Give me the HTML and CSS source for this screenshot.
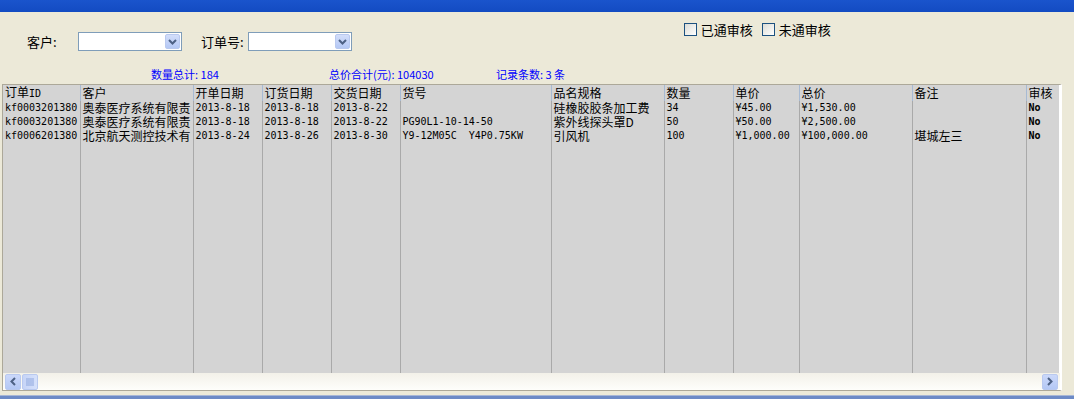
FILE: index.html
```html
<!DOCTYPE html>
<html lang="zh-CN">
<head>
	<meta charset="UTF-8">
	<title>订单审核</title>
	<link rel="stylesheet" href="styles.css">
</head>
<body>
<div class="titlebar"></div>

<div class="filters">
	<div class="search">
		<span class="label">客户:</span>
		<div class="combo"><span class="drop"><svg width="9" height="6" viewBox="0 0 9 6"><path d="M1 1l3.5 3.5L8 1" fill="none" stroke="#4d6185" stroke-width="2"/></svg></span></div>
		<span class="label second">订单号:</span>
		<div class="combo"><span class="drop"><svg width="9" height="6" viewBox="0 0 9 6"><path d="M1 1l3.5 3.5L8 1" fill="none" stroke="#4d6185" stroke-width="2"/></svg></span></div>
	</div>
	<div class="checks">
		<label class="check"><span class="box"></span>已通审核</label>
		<label class="check"><span class="box"></span>未通审核</label>
	</div>
</div>

<div class="stats">
	<span class="stat s1">数量总计: 184</span>
	<span class="stat s2">总价合计(元): 104030</span>
	<span class="stat s3">记录条数: 3 条</span>
</div>

<div class="grid">
	<div class="view">
		<table class="orders">
			<colgroup>
				<col style="width:77px"><col style="width:113px"><col style="width:69px"><col style="width:69px">
				<col style="width:69px"><col style="width:151px"><col style="width:113px"><col style="width:69px">
				<col style="width:66px"><col style="width:113px"><col style="width:114px"><col style="width:40px">
			</colgroup>
			<thead>
			<tr>
				<th>订单<span class="m">ID</span></th><th>客户</th><th>开单日期</th><th>订货日期</th><th>交货日期</th><th>货号</th>
				<th>品名规格</th><th>数量</th><th>单价</th><th>总价</th><th>备注</th><th>审核</th>
			</tr>
			</thead>
			<tbody>
			<tr>
				<td class="m">kf0003201380</td><td>奥泰医疗系统有限责</td><td class="m">2013-8-18</td><td class="m">2013-8-18</td><td class="m">2013-8-22</td><td></td>
				<td>硅橡胶胶条加工费</td><td class="m">34</td><td class="m">¥45.00</td><td class="m">¥1,530.00</td><td></td><td class="m b">No</td>
			</tr>
			<tr>
				<td class="m">kf0003201380</td><td>奥泰医疗系统有限责</td><td class="m">2013-8-18</td><td class="m">2013-8-18</td><td class="m">2013-8-22</td><td class="m">PG90L1-10-14-50</td>
				<td>紫外线探头罩D</td><td class="m">50</td><td class="m">¥50.00</td><td class="m">¥2,500.00</td><td></td><td class="m b">No</td>
			</tr>
			<tr>
				<td class="m">kf0006201380</td><td>北京航天测控技术有</td><td class="m">2013-8-24</td><td class="m">2013-8-26</td><td class="m">2013-8-30</td><td class="m">Y9-12M05C  Y4P0.75KW</td>
				<td>引风机</td><td class="m">100</td><td class="m">¥1,000.00</td><td class="m">¥100,000.00</td><td>堪城左三</td><td class="m b">No</td>
			</tr>
			<tr class="filler">
				<td></td><td></td><td></td><td></td><td></td><td></td><td></td><td></td><td></td><td></td><td></td><td></td>
			</tr>
			</tbody>
		</table>
	</div>
	<div class="hscroll">
		<span class="btn"><svg width="8" height="9" viewBox="0 0 8 9"><path d="M6 1L2.5 4.5 6 8" fill="none" stroke="#4d6185" stroke-width="2"/></svg></span>
		<span class="thumb"><svg width="9" height="8" viewBox="0 0 9 8"><path d="M1 0v8M3 0v8M5 0v8M7 0v8" stroke="#8fa7dd" stroke-width="1"/></svg></span>
		<span class="track"></span>
		<span class="btn"><svg width="8" height="9" viewBox="0 0 8 9"><path d="M2 1l3.5 3.5L2 8" fill="none" stroke="#4d6185" stroke-width="2"/></svg></span>
	</div>
</div>
<div class="taskbar"></div>
</body>
</html>
```

FILE: styles.css
```css
* {
	margin: 0;
	padding: 0;
	box-sizing: border-box;
}

body {
	width: 1074px;
	height: 399px;
	overflow: hidden;
	background-color: #ece9d8;
	font-family: "Noto Sans CJK SC", sans-serif;
	font-size: 12px;
	color: #000;
}

.titlebar {
	height: 12px;
	background: linear-gradient(#1a54cc, #134bc2);
}

.filters {
	display: flex;
	align-items: flex-start;
	height: 40px;
}
.search {
	display: flex;
	align-items: center;
	margin-top: 20px;
	padding-left: 27px;
}
.label {
	font-size: 13px;
	width: 51px;
}
.label.second {
	width: auto;
	margin-left: 19px;
	margin-right: 4px;
}
.combo {
	width: 104px;
	height: 19px;
	border: 1px solid #7f9db9;
	background-color: #fff;
	display: flex;
	justify-content: flex-end;
	padding: 1px;
}
.drop {
	width: 15px;
	height: 15px;
	border: 1px solid #b9c9ef;
	border-radius: 2px;
	background: linear-gradient(#d3defa, #b4c8f5);
	display: flex;
	align-items: center;
	justify-content: center;
}

.checks {
	display: flex;
	gap: 9px;
	margin-top: 8px;
	margin-left: 332px;
}
.check {
	display: flex;
	align-items: center;
	gap: 4px;
	font-size: 13px;
}
.box {
	width: 13px;
	height: 13px;
	border: 1px solid #1c5180;
	background: linear-gradient(135deg, #dcdcd6, #fff);
}

.stats {
	display: flex;
	height: 32px;
	padding-top: 15px;
	padding-left: 151px;
	color: #0000ff;
	font-size: 11px;
	line-height: 14px;
}
.s1 { width: 178px; }
.s2 { width: 167px; }

.grid {
	width: 1060px;
	height: 307px;
	margin-left: 2px;
	border-top: 1px solid #aca899;
	border-left: 1px solid #aca899;
	border-right: 2px solid #fff;
	border-bottom: 1px solid #aca899;
	box-shadow: 1px 0 0 #aca899 inset;
	background-color: #fff;
}
.view {
	height: 288px;
	overflow: hidden;
	background-color: #d4d4d4;
	margin-right: 1px;
}
.orders {
	table-layout: fixed;
	border-collapse: collapse;
	width: 1063px;
}
.orders th,
.orders td {
	border-right: 1px solid #a9a9a9;
	white-space: nowrap;
	overflow: hidden;
	text-align: left;
	font-weight: normal;
	padding-left: 2px;
	vertical-align: middle;
}
.orders th {
	height: 16px;
	line-height: 14px;
	font-size: 12px;
	border-right-color: #a7bad3;
}
.orders td {
	height: 14px;
	line-height: 14px;
}
.orders .filler td {
	height: 230px;
}
.orders .m {
	font-family: "DejaVu Sans Mono", monospace;
	font-size: 10px;
	white-space: pre;
}
.orders .b {
	font-weight: bold;
}

.hscroll {
	display: flex;
	align-items: center;
	height: 17px;
	padding: 0 2px 0 2px;
	background: linear-gradient(#f3f1e9, #fefefb);
}
.btn,
.thumb {
	width: 16px;
	height: 16px;
	border: 1px solid #b9c9ef;
	border-radius: 2px;
	background: linear-gradient(#cbd8fa, #b4c8f5);
	display: flex;
	align-items: center;
	justify-content: center;
}
.thumb {
	margin-left: 1px;
	background: linear-gradient(90deg, #c6d4f7, #d6e1fb);
}
.track {
	flex: 1;
}

.taskbar {
	height: 4px;
	margin-top: 4px;
	border-top: 1px solid #a6b6d6;
	background-color: #6c8ac6;
}
```
